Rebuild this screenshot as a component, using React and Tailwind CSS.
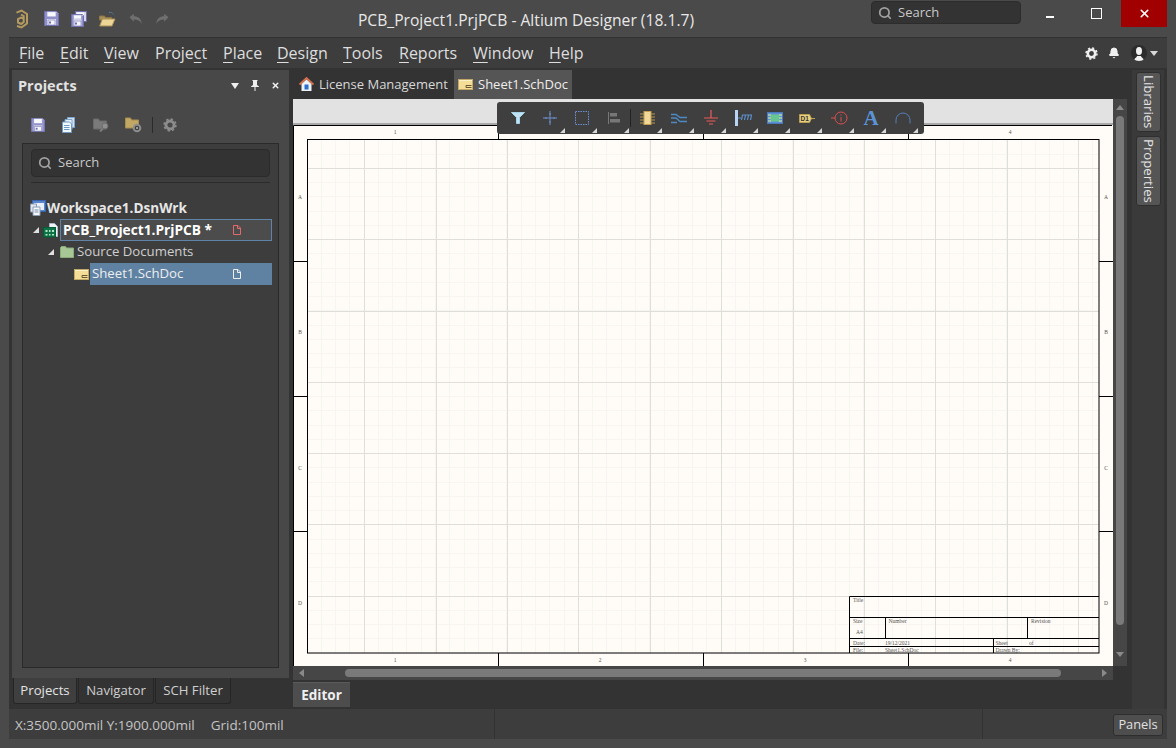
import React from "react";
import { Search, Bell, X } from "lucide-react";

const Floppy = ({ s = 15 }) => (
  <svg width={s} height={s} viewBox="0 0 15 15">
    <path d="M.5.5h12l2 2v12H.5z" fill="#e8e8f4" stroke="#6f6fae" />
    <rect x="3" y=".8" width="9" height="5" fill="#f8f8ff" stroke="#8a8ac4" strokeWidth=".6" />
    <rect x="1" y="1" width="2" height="13" fill="#8f8fca" />
    <rect x="12" y="1.5" width="2" height="12.5" fill="#8f8fca" />
    <rect x="3" y="6" width="9" height="2" fill="#8f8fca" />
    <rect x="4" y="9" width="7" height="5" fill="#f4f4fa" stroke="#6f6fae" strokeWidth=".6" />
    <rect x="5" y="10.5" width="2" height="2" fill="#6f6fae" />
  </svg>
);

const SaveAll = () => (
  <svg width="16" height="16" viewBox="0 0 16 16">
    <path d="M4.500.5h11v10h-11z" fill="#d8d8ec" stroke="#6f6fae" />
    <rect x="6" y="1.500" width="7" height="2.500" fill="#f8f8ff" />
    <path d="M.5 3.500h11l1 1v11H.5z" fill="#e8e8f4" stroke="#6f6fae" />
    <rect x="2.500" y="4" width="8" height="4" fill="#f8f8ff" stroke="#8a8ac4" strokeWidth=".5" />
    <rect x="1" y="4" width="1.500" height="11" fill="#8f8fca" />
    <rect x="10.500" y="4.500" width="1.500" height="10.500" fill="#8f8fca" />
    <rect x="3" y="10" width="7" height="5" fill="#f4f4fa" stroke="#6f6fae" strokeWidth=".6" />
    <rect x="4" y="11.500" width="2" height="2" fill="#6f6fae" />
  </svg>
);

const OpenFolder = () => (
  <svg width="17" height="16" viewBox="0 0 17 16">
    <path d="M10 1.500c2-.6 3.600.2 4.500 2" fill="none" stroke="#4e86b8" strokeWidth="1" strokeDasharray="1.500 .8" />
    <path d="M.5 5h5l1 1.500h6V9H.5z" fill="#a88f58" stroke="#8b7544" />
    <path d="M.7 15l2.600-7H16l-3 7z" fill="#ecd596" stroke="#a88f58" />
  </svg>
);

const Undo = ({ flip }) => (
  <svg width="15" height="12" viewBox="0 0 15 12" className={flip ? "-scale-x-100" : ""}>
    <path d="M1.500 4.200L5.800.8v2.400c4 0 7.800 2.400 7.800 7.800-1.400-3.200-4-4.400-7.800-4.400v2.200z" fill="#6f6f6f" />
  </svg>
);

const Logo = () => (
  <svg width="14" height="20" viewBox="0 0 14 20" fill="none" stroke="#b59a60" strokeWidth="2">
    <path d="M1.500 3.600L6.500 1.500l5.500 3.500v9.500l-5.500 4-4.500-1.500" />
    <path d="M6 5.500l2.700 1.500v6l-2.500 2-3.200-1.500V10l3-1.500 2.500 1.200" />
  </svg>
);

const CopyDocs = () => (
  <svg width="14" height="16" viewBox="0 0 14 16">
    <path d="M5.500.5h7v10h-7z" fill="#cfe0f0" stroke="#7ea6cc" />
    <path d="M3 2.500h7v10H3z" fill="#e6eff8" stroke="#7ea6cc" />
    <path d="M.5 5h7l2 2v8.500h-9z" fill="#f3f8fc" stroke="#6f9ac4" />
    <path d="M2 8.500h5.500M2 10.500h5.500M2 12.500h5.500" stroke="#6f9ac4" />
  </svg>
);

const FolderSearch = () => (
  <svg width="17" height="14" viewBox="0 0 17 14">
    <path d="M.5 1h5l1 2h7v8H.5z" fill="#7b7b7b" stroke="#6a6a6a" />
    <circle cx="12" cy="8" r="3" fill="#8f8f8f" stroke="#6a6a6a" />
    <path d="M10 10.500l-3 3" stroke="#7b7b7b" strokeWidth="2" />
  </svg>
);

const FolderGear = () => (
  <svg width="17" height="16" viewBox="0 0 17 16">
    <path d="M.5 1h5l1 2h7v8H.5z" fill="#c3a765" stroke="#a98d4f" />
    <circle cx="12" cy="11" r="3.300" fill="#3f3f3f" stroke="#8d8d8d" strokeWidth="2" />
    <circle cx="12" cy="11" r="1" fill="#bbb" />
  </svg>
);

const Gear = ({ s = 14, c = "#8c8c8c" }) => (
  <svg width={s} height={s} viewBox="0 0 14 14">
    <circle cx="7" cy="7" r="4" fill="none" stroke={c} strokeWidth="2.800" />
    <circle cx="7" cy="7" r="5.900" fill="none" stroke={c} strokeWidth="1.600" strokeDasharray="2.300 2.330" />
  </svg>
);

const Page = ({ c }) => (
  <svg width="8" height="10" viewBox="0 0 8 10">
    <path d="M.5.5h4.500l2.500 2.500v6.500h-7z" fill="none" stroke={c} />
    <path d="M4.500.5v3h3" fill="none" stroke={c} />
  </svg>
);

const SchDoc = () => (
  <svg width="15" height="11" viewBox="0 0 15 11">
    <rect x=".5" y=".5" width="14" height="10" fill="#f3dd97" stroke="#c2a868" />
    <path d="M1 1.500h13" stroke="#fbf0c8" />
    <path d="M8 8.500h5.500M8 6.500h5.500M8 6.500v2" stroke="#66572e" />
  </svg>
);

const GreenFolder = () => (
  <svg width="14" height="12" viewBox="0 0 14 12">
    <path d="M.5 1.500l1-1h4l1 1.500h7v9.500H.5z" fill="#a7c797" stroke="#8bab7b" />
  </svg>
);

const Workspace = () => (
  <svg width="16" height="16" viewBox="0 0 16 16">
    <rect x="2.500" y=".5" width="13" height="11" fill="#5a84cc" stroke="#3b63aa" />
    <rect x="4" y="3" width="10" height="7" fill="#e9f0fa" />
    <path d="M.5 4h6v8h-6z" fill="#dfe7f2" stroke="#8c9bb0" />
    <path d="M3 7h7v8.500H3z" fill="#f4f7fc" stroke="#8c9bb0" />
    <path d="M4.500 10h4M4.500 12h4" stroke="#7d8ea8" />
  </svg>
);

const PcbProject = () => (
  <svg width="16" height="15" viewBox="0 0 16 15">
    <path d="M6.500.5h5l3 3v10h-8z" fill="#eef2f6" stroke="#aeb7c2" />
    <rect x=".5" y="4.500" width="12" height="9.500" fill="#0c7446" stroke="#065c35" />
    <path d="M2.500 7h2v2h-2zM6 7h1.500v2H6zM9 7h2v2H9zM2.500 11h2v1.500h-2zM6 11h1.500v1.500H6zM9 11h2v1.500H9z" fill="#b6e6c6" />
  </svg>
);

const Tri = ({ c = "#d8d8d8" }) => (
  <svg width="5" height="5" viewBox="0 0 5 5"><path d="M5 0v5H0z" fill={c} /></svg>
);

const ToolIcons = {
  filter: <svg width="14" height="12" viewBox="0 0 14 12"><path d="M.5.5h13L8.500 5.500V11.500h-3V5.500z" fill="#bfe3f2" stroke="#a5d2e8" /></svg>,
  cross: <svg width="14" height="14" viewBox="0 0 14 14"><path d="M7 0v14M0 7h14" stroke="#6c8fd0" /><path d="M3 6v2M11 6v2M6 3h2M6 11h2" stroke="#6c8fd0" /></svg>,
  sel: <svg width="14" height="14" viewBox="0 0 14 14"><rect x=".5" y=".5" width="13" height="13" fill="none" stroke="#6c8fd8" strokeDasharray="1.500 1" /></svg>,
  align: <svg width="12" height="12" viewBox="0 0 12 12"><path d="M.5 0v12" stroke="#777" /><rect x="2" y="1" width="7" height="3.500" fill="#777" /><rect x="2" y="7" width="10" height="3.500" fill="#777" /></svg>,
  comp: <svg width="15" height="14" viewBox="0 0 15 14"><rect x="4" y=".5" width="7" height="13" fill="#f2d79a" stroke="#c2a050" /><path d="M0 3h4M0 6h4M0 9h4M0 12h4M11 3h4M11 6h4M11 9h4M11 12h4" stroke="#b59a50" /></svg>,
  wire: <svg width="16" height="11" viewBox="0 0 16 11"><path d="M0 1.500h5l4 3h7M0 5h5l4 3.500h7M0 9.500h6" fill="none" stroke="#4d8ac4" strokeWidth="1.400" /></svg>,
  gnd: <svg width="16" height="16" viewBox="0 0 16 16"><path d="M8 0v8M1 8h14M3.500 11h9M6 14h4" stroke="#f05a5a" strokeWidth="1.200" /></svg>,
  bus: <svg width="17" height="16" viewBox="0 0 17 16"><rect x="0" y="0" width="3" height="16" fill="#b8d4f4" /><path d="M3 8h3M7 5h10M7.500 5L6.500 10M10.500 5l-1 5M13.500 5l-1 5M16.500 5l-1 5" stroke="#5e90cc" strokeWidth="1.200" fill="none" /></svg>,
  sheet: <svg width="16" height="12" viewBox="0 0 16 12"><rect x=".5" y=".5" width="15" height="11" fill="#5c90d4" stroke="#4a78b8" /><rect x="3.500" y="2.500" width="9" height="7" fill="#66c690" /><path d="M1 3h3M1 6h3M1 9h3M12 3h3M12 6h3M12 9h3" stroke="#e6f0a0" /></svg>,
  port: <svg width="16" height="9" viewBox="0 0 16 9"><path d="M.5.5h10l2 4-2 4H.5z" fill="#e8cf80" stroke="#b99d50" /><path d="M12 4.500h4" stroke="#c2a050" /><text x="1.500" y="7" fontSize="6.500" fontWeight="700" fill="#333" fontFamily="Liberation Sans">D1</text></svg>,
  info: <svg width="17" height="14" viewBox="0 0 17 14"><path d="M0 7h4" stroke="#dd4f4f" /><circle cx="10" cy="7" r="6" fill="none" stroke="#dd4f4f" /><path d="M10 3.500v1.200M10 6v4.500" stroke="#dd4f4f" /></svg>,
  text: <span className="text-[21px] leading-none font-bold text-[#5b94d6] [font-family:'Liberation_Serif',serif]">A</span>,
  arc: <svg width="16" height="12" viewBox="0 0 16 12"><path d="M1 11.500V8a7 7 0 0 1 14 0v3.500" fill="none" stroke="#557fb8" strokeWidth="1" /></svg>,
};

const tools = [
  ["filter", false], ["cross", true], ["sel", true], ["align", true], ["sep"],
  ["comp", true], ["wire", true], ["gnd", true], ["bus", true], ["sheet", true],
  ["port", true], ["info", true], ["text", true], ["arc", true],
];

const Toolbar = () => (
  <div className="absolute left-[204px] top-[3px] w-[427px] h-[32px] rounded-[3px] bg-[#3f3f3f] flex items-center pl-[5px]">
    {tools.map(([k, tri], i) =>
      k === "sep" ? (
        <div key={i} className="w-px h-[18px] bg-[#222] shrink-0" />
      ) : (
        <div key={i} className="relative w-[32px] h-[32px] shrink-0 flex items-center justify-center">
          {ToolIcons[k]}
          {tri && <div className="absolute right-[1px] bottom-[1px] flex"><Tri /></div>}
        </div>
      )
    )}
  </div>
);

const snap = (v) => Math.floor(v) + 0.5;
const majorXs = Array.from({ length: 11 }, (_, i) => snap(364.6 + i * 71.4));
const majorYs = Array.from({ length: 7 }, (_, i) => snap(168.4 + i * 71.3));
const minorXs = Array.from({ length: 56 }, (_, i) => snap(307 + i * 14.28));
const minorYs = Array.from({ length: 37 }, (_, i) => snap(139.8 + i * 14.26));

const Sheet = () => {
  const ox = 293, oy = 125;
  const L = ({ x1, y1, x2, y2, c = "#000", w = 1 }) => (
    <line x1={x1 - ox} y1={y1 - oy} x2={x2 - ox} y2={y2 - oy} stroke={c} strokeWidth={w} />
  );
  const T = ({ x, y, children, a = "start", s = 5.5 }) => (
    <text x={x - ox} y={y - oy} textAnchor={a} fontSize={s} fill="#000" fontFamily="Liberation Serif">{children}</text>
  );
  return (
    <svg width="820" height="541" viewBox="0 0 820 541" className="block bg-[#fffcf7]">
      {minorXs.map((x, i) => <L key={i} x1={x} y1={139} x2={x} y2={653} c="#f6f5f1" />)}
      {minorYs.map((y, i) => <L key={i} x1={307} y1={y} x2={1099} y2={y} c="#f6f5f1" />)}
      {majorXs.map((x, i) => <L key={i} x1={x} y1={139} x2={x} y2={653} c="#dfded9" />)}
      {majorYs.map((y, i) => <L key={i} x1={307} y1={y} x2={1099} y2={y} c="#dfded9" />)}
      {[596.5, 617.5, 638.5, 646.5].map((y) => <L key={y} x1={849.5} y1={y} x2={1099} y2={y} />)}
      <L x1={849.5} y1={596.5} x2={849.5} y2={653} />
      <L x1={885.5} y1={617} x2={885.5} y2={638.5} />
      <L x1={1027.5} y1={617} x2={1027.5} y2={638.5} />
      <L x1={993.5} y1={638.5} x2={993.5} y2={653} />
      <rect x="14.500" y="14.500" width="791.500" height="513.500" fill="none" stroke="#000" />
      <path d="M.5 541V.5H819" fill="none" stroke="#000" />
      {[498.5, 703.5, 908.5].map((x) => (
        <g key={x}><L x1={x} y1={125} x2={x} y2={139} /><L x1={x} y1={653} x2={x} y2={666} /></g>
      ))}
      {[261.5, 396.5, 531.5].map((y) => (
        <g key={y}><L x1={293} y1={y} x2={307} y2={y} /><L x1={1099} y1={y} x2={1113} y2={y} /></g>
      ))}
      <g opacity="0.7">
        {[[395, "1"], [600, "2"], [805, "3"], [1010, "4"]].map(([x, t]) => (
          <g key={t}><T x={x} y={134} a="middle">{t}</T><T x={x} y={662} a="middle">{t}</T></g>
        ))}
        {[[199, "A"], [334, "B"], [470, "C"], [605, "D"]].map(([y, t]) => (
          <g key={t}><T x={300} y={y} a="middle">{t}</T><T x={1106} y={y} a="middle">{t}</T></g>
        ))}
        <T x={853} y={602}>Title</T>
        <T x={853} y={623}>Size</T>
        <T x={888.5} y={623}>Number</T>
        <T x={1031} y={623}>Revision</T>
        <T x={856} y={634}>A4</T>
        <T x={853} y={644.5}>Date:</T>
        <T x={885} y={644.5}>19/12/2021</T>
        <T x={995.5} y={644.5}>Sheet</T>
        <T x={1029} y={644.5}>of</T>
        <T x={853} y={651.5}>File:</T>
        <T x={885} y={651.5}>Sheet1.SchDoc</T>
        <T x={995.5} y={651.5}>Drawn By:</T>
      </g>
    </svg>
  );
};

const Ul = ({ pre = "", u, post = "" }) => (
  <span>{pre}<span className="underline underline-offset-[3px] decoration-1">{u}</span>{post}</span>
);

const menus = [
  ["w-[41px]", "", "F", "ile"],
  ["w-[44px]", "", "E", "dit"],
  ["w-[51px]", "", "V", "iew"],
  ["w-[68px]", "Proje", "c", "t"],
  ["w-[54px]", "", "P", "lace"],
  ["w-[66px]", "", "D", "esign"],
  ["w-[56px]", "", "T", "ools"],
  ["w-[74px]", "", "R", "eports"],
  ["w-[76px]", "", "W", "indow"],
  ["w-[40px]", "", "H", "elp"],
];

const Row = ({ className, children }) => (
  <div className={`flex items-center h-[22px] ${className}`}>{children}</div>
);

const Expand = () => (
  <svg width="6" height="6" viewBox="0 0 6 6" className="shrink-0"><path d="M6 0v6H0z" fill="#e0e0e0" /></svg>
);

export default function App() {
  return (
    <div className="w-[1176px] h-[748px] overflow-hidden flex flex-col bg-[#4a4a4a] text-[#dcdcdc] [font-family:'Open_Sans','Noto_Sans',sans-serif]">
      {/* Title bar */}
      <div className="h-[37px] shrink-0 flex items-start relative">
        <div className="flex items-center h-[37px]">
          <div className="ml-[15px] w-[14px] flex"><Logo /></div>
          <div className="ml-[15px] flex"><Floppy /></div>
          <div className="ml-[12px] flex"><SaveAll /></div>
          <div className="ml-[12px] flex"><OpenFolder /></div>
          <div className="ml-[12px] flex"><Undo /></div>
          <div className="ml-[12px] flex"><Undo flip /></div>
        </div>
        <div className="absolute left-[348px] top-[10px] w-[356px] text-center text-[15.65px] leading-[21px] text-[#e8e8e8] whitespace-nowrap">
          PCB_Project1.PrjPCB - Altium Designer (18.1.7)
        </div>
        <div className="ml-auto flex items-start">
          <div className="w-[150px] h-[23px] mt-[1px] rounded-[4px] bg-[#333] border border-[#2c2c2c] flex items-center pl-[6px] gap-[6px]">
            <Search size={14} strokeWidth={3} className="text-[#a0a0a0]" />
            <span className="text-[13px] text-[#c8c8c8]">Search</span>
          </div>
          <div className="w-[58px] h-[27px] flex items-center justify-center pt-[5px]"><div className="w-[8px] h-[2px] bg-white mt-[2px]" /></div>
          <div className="w-[46px] h-[27px] flex items-center justify-center -ml-[6px]"><div className="w-[11px] h-[11px] border border-white" /></div>
          <div className="w-[46px] h-[27px] ml-[2px] mr-[9px] bg-[#a00000] flex items-center justify-center">
            <X size={13} strokeWidth={3} className="text-white" />
          </div>
        </div>
      </div>

      {/* Inner window */}
      <div className="flex-1 mx-[9px] flex flex-col min-h-0 border-t border-[#333]">
        {/* Menu */}
        <div className="h-[30px] shrink-0 bg-[#3d3d3d] flex items-center pl-[10px] text-[16px] text-[#dedede]">
          {menus.map(([w, pre, u, post]) => (
            <div key={u + post} className={`${w} shrink-0`}><Ul pre={pre} u={u} post={post} /></div>
          ))}
          <div className="ml-auto flex items-center pr-[9px]">
            <Gear s={13} c="#f0f0f0" />
            <Bell size={12} fill="#f0f0f0" className="text-[#f0f0f0] ml-[10px]" />
            <div className="ml-[11px] w-[16px] h-[16px] rounded-full bg-[#2c2c2c] flex justify-center overflow-hidden">
              <svg width="16" height="16" viewBox="0 0 16 16"><ellipse cx="8" cy="6" rx="3" ry="4" fill="#f2f2f2" /><path d="M3 16c0-3 3-3.500 3-5h4c0 1.500 3 2 3 5z" fill="#f2f2f2" /></svg>
            </div>
            <svg width="8" height="5" viewBox="0 0 8 5" className="ml-[3px]"><path d="M0 0h8L4 5z" fill="#d8d8d8" /></svg>
          </div>
        </div>

        {/* Body */}
        <div className="h-[641px] shrink-0 bg-[#333] flex">
          {/* Left column */}
          <div className="w-[280px] shrink-0 pl-[3px] pt-[2px] flex flex-col">
            <div className="h-[608px] bg-[#484848] flex flex-col px-[10px] relative">
              <div className="h-[31px] shrink-0 -mx-[10px] pl-[6px] pr-[9px] flex items-center">
                <span className="text-[14.5px] font-bold text-[#e2e2e2]">Projects</span>
                <div className="ml-auto flex items-center gap-[12px]">
                  <svg width="8" height="6" viewBox="0 0 8 6"><path d="M0 0h8L4 6z" fill="#f0f0f0" /></svg>
                  <svg width="8" height="11" viewBox="0 0 8 11"><path d="M1.500 0h5v1H6v4l2 1.500V7H4.500v4h-1V7H0v-.5L2 5V1h-.5z" fill="#f0f0f0" /></svg>
                  <X size={9} strokeWidth={4} className="text-[#f0f0f0]" />
                </div>
              </div>
              <div className="h-[42px] shrink-0 flex items-center pl-[9px] pt-[6px]">
                <Floppy s={14} />
                <div className="flex ml-[17px]"><CopyDocs /></div>
                <div className="flex ml-[17px]"><FolderSearch /></div>
                <div className="flex ml-[15px]"><FolderGear /></div>
                <div className="w-px h-[16px] bg-[#2a2a2a] ml-[10px]" />
                <div className="flex ml-[10px]"><Gear s={14} /></div>
              </div>
              <div className="h-[525px] shrink-0 bg-[#3d3d3d] border border-[#2a2a2a] flex flex-col px-[8px] pt-[5px] text-[13.2px]">
                <div className="h-[28px] shrink-0 rounded-[4px] bg-[#333] border border-[#2b2b2b] flex items-center pl-[6px] gap-[6px]">
                  <Search size={14} strokeWidth={3} className="text-[#a0a0a0]" />
                  <span className="text-[13px] text-[#c8c8c8]">Search</span>
                </div>
                <div className="h-px bg-[#2b2b2b] mt-[5px] shrink-0" />
                <div className="flex flex-col mt-[14px] -ml-[8px] -mr-[2px]">
                  <Row className="pl-[7px] gap-[1px]">
                    <Workspace />
                    <span className="font-bold text-[13.6px] text-[#e6e6e6]">Workspace1.DsnWrk</span>
                  </Row>
                  <Row className="pl-[10px]">
                    <Expand />
                    <div className="ml-[4px] flex"><PcbProject /></div>
                    <div className="flex-1 h-[22px] ml-[1px] bg-[#4c4c4c] border border-[#5f84a8] flex items-center pl-[2px]">
                      <span className="font-bold text-[13.7px] text-white">PCB_Project1.PrjPCB *</span>
                      <div className="absolute left-[221px] flex"><Page c="#e26a6a" /></div>
                    </div>
                  </Row>
                  <Row className="pl-[25px]">
                    <Expand />
                    <div className="ml-[6px] flex"><GreenFolder /></div>
                    <span className="ml-[3px] text-[#cfcfcf]">Source Documents</span>
                  </Row>
                  <Row className="pl-[51px]">
                    <SchDoc />
                    <div className="flex-1 h-[22px] bg-[#5f82a3] flex items-center pl-[2px] ml-[1px]">
                      <span className="text-[#eeeeee]">Sheet1.SchDoc</span>
                      <div className="absolute left-[221px] flex"><Page c="#eeeeee" /></div>
                    </div>
                  </Row>
                </div>
              </div>
            </div>
            {/* Bottom tabs */}
            <div className="flex h-[26px] text-[13.2px] pl-[1px] gap-px">
              {[["Projects", "w-[64px] bg-[#3f3f3f] text-[#e4e4e4]"], ["Navigator", "w-[76px] bg-[#333] text-[#cfcfcf]"], ["SCH Filter", "w-[76px] bg-[#333] text-[#cfcfcf]"]].map(([t, c]) => (
                <div key={t} className={`${c} border border-t-0 border-[#262626] rounded-b-[3px] flex items-center justify-center`}>{t}</div>
              ))}
            </div>
          </div>

          {/* Centre */}
          <div className="w-[834px] ml-[4px] shrink-0 flex flex-col">
            <div className="h-[31px] shrink-0 flex items-end text-[13px] whitespace-nowrap">
              <div className="h-[29px] w-[161px] flex items-center pl-[6px] gap-[5px] text-[#d8d8d8]">
                <svg width="15" height="15" viewBox="0 0 15 15" className="shrink-0">
                  <path d="M.5 7.500L7.500 1l7 6.500" fill="none" stroke="#d8704a" strokeWidth="1.800" />
                  <path d="M2.500 7L7.500 2.500 12.500 7v7h-10z" fill="#eef2f6" />
                  <rect x="5.500" y="7.500" width="4" height="5" fill="#2c6fd0" />
                </svg>
                License Management
              </div>
              <div className="h-[29px] w-[118px] bg-[#555] flex items-center pl-[4px] gap-[5px] text-[#eeeeee]">
                <SchDoc />
                <span className="ml-[0px]">Sheet1.SchDoc</span>
              </div>
            </div>
            <div className="flex-1 flex flex-col relative min-h-0">
              <div className="flex">
                <div className="w-[820px] shrink-0 flex flex-col bg-[#e2e2e2]">
                  <div className="h-[26px] shrink-0 border-b-2 border-[#a8a8a8]" />
                  <Sheet />
                </div>
                <div className="w-[14px] shrink-0 bg-[#464646] flex flex-col items-center relative">
                  <svg width="8" height="5" viewBox="0 0 8 5" className="mt-[6px]"><path d="M0 5h8L4 0z" fill="#8a8a8a" /></svg>
                  <div className="w-[8px] h-[509px] mt-[6px] rounded-[4px] bg-[#7a7a7a]" />
                  <svg width="8" height="5" viewBox="0 0 8 5" className="mt-[27px]"><path d="M0 0h8L4 5z" fill="#8a8a8a" /></svg>
                </div>
              </div>
              <div className="h-[14px] shrink-0 w-[820px] bg-[#464646] flex items-center">
                <svg width="5" height="8" viewBox="0 0 5 8" className="ml-[6px]"><path d="M5 0v8L0 4z" fill="#8a8a8a" /></svg>
                <div className="w-[716px] h-[8px] ml-[41px] rounded-[4px] bg-[#7a7a7a]" />
                <svg width="5" height="8" viewBox="0 0 5 8" className="ml-[41px]"><path d="M0 0v8l5-4z" fill="#8a8a8a" /></svg>
              </div>
              <div className="h-[2px] shrink-0" />
              <div className="h-[25px] w-[57px] bg-[#4d4d4d] flex items-center justify-center text-[13.5px] font-bold text-[#f0f0f0] border-t border-[#5a5a5a]">Editor</div>
              <Toolbar />
            </div>
          </div>

          {/* Right strip */}
          <div className="w-[32px] ml-[5px] mt-[2px] h-[639px] bg-[#3a3a3a] flex flex-col items-center pt-[2px] gap-[4px] text-[13.2px] text-[#e4e4e4]">
            <div className="w-[25px] h-[60px] bg-[#555] border border-[#2f2f2f] rounded-[3px] flex items-center justify-center [writing-mode:vertical-rl]">Libraries</div>
            <div className="w-[25px] h-[70px] bg-[#555] border border-[#2f2f2f] rounded-[3px] flex items-center justify-center [writing-mode:vertical-rl]">Properties</div>
          </div>
        </div>

        {/* Status */}
        <div className="h-[30px] shrink-0 bg-[#3d3d3d] flex items-center text-[13.5px] text-[#c4c4c4] mb-[9px] relative">
          <div className="w-[486px] h-full pl-[6px] pt-[2px] flex items-center gap-[16px] border-r border-[#333] whitespace-nowrap">
            <span>X:3500.000mil Y:1900.000mil</span>
            <span>Grid:100mil</span>
          </div>
          <div className="w-[488px] h-full border-r border-[#333]" />
          <div className="ml-auto mr-[4px] mt-[2px] w-[50px] h-[22px] bg-[#4e4e4e] border border-[#2e2e2e] rounded-[3px] flex items-center justify-center text-[12.8px] text-[#e0e0e0]">Panels</div>
        </div>
      </div>
    </div>
  );
}
